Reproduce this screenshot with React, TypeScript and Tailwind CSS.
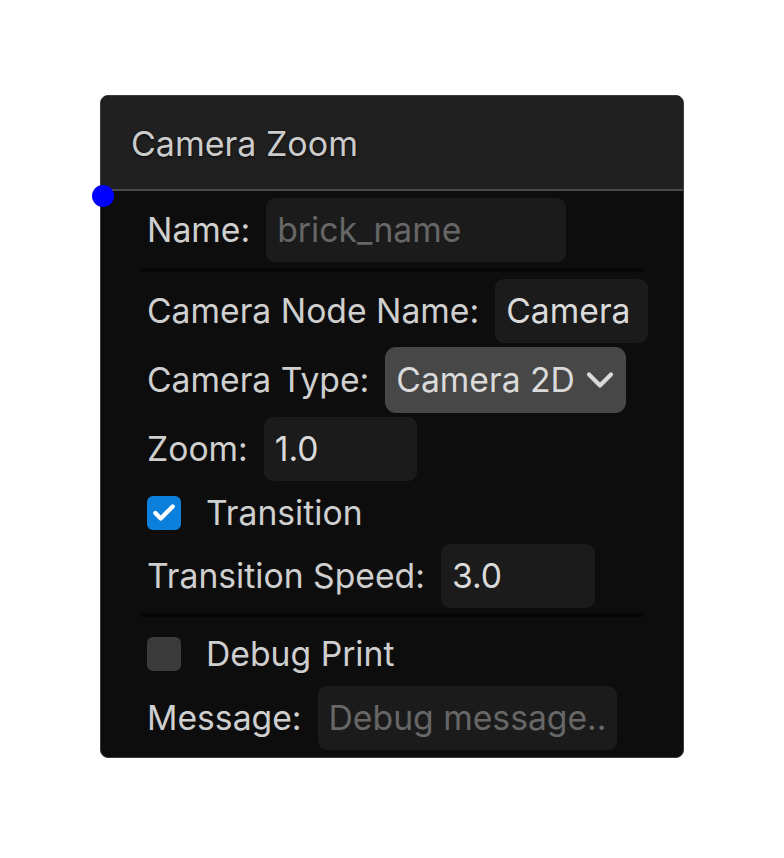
import { ChevronDown, Check } from 'lucide-react'

type FieldProps = {
    label: string
    value?: string
    placeholder?: string
    width: string
}

function Field({ label, value, placeholder, width }: FieldProps) {
    return (
        <div className="flex items-center h-[64px] gap-[16px]">
            <span className="text-[#cfcfcf] whitespace-nowrap">{label}</span>
            <div className={`h-full ${width} shrink-0 rounded-[9px] bg-[#1b1b1b] px-[11px] flex items-center overflow-hidden whitespace-nowrap`}>
                {value ? (
                    <span className="text-[#dadada]">{value}</span>
                ) : (
                    <span className="text-[#676767]">{placeholder}</span>
                )}
            </div>
        </div>
    )
}

function Toggle({ label, checked }: { label: string; checked: boolean }) {
    return (
        <div className="flex items-center h-[55px] gap-[25px]">
            <div
                className={`w-[34px] h-[34px] shrink-0 rounded-[6px] flex items-center justify-center ${checked ? 'bg-[#0b7fdc]' : 'bg-[#3a3a3a]'}`}
            >
                {checked && <Check className="w-[26px] h-[26px] text-white" strokeWidth={4} />}
            </div>
            <span className="text-[#cfcfcf]">{label}</span>
        </div>
    )
}

export default function App() {
    return (
        <div className="min-h-screen bg-white pt-[95px] pl-[100px]" style={{ fontFamily: 'Inter, "Noto Sans", sans-serif' }}>
            <div className="relative w-[584px] rounded-[8px] border border-[#3c3c3c] bg-[#0d0d0d] text-[33.7px] leading-none">
                {/* Node header */}
                <div className="h-[95px] px-[30px] pt-[3px] flex items-center bg-[#202020] rounded-t-[8px] border-b-2 border-[#4a4a4a]">
                    <span className="text-[34px] text-[#cbcbcb] [text-shadow:0_1px_3px_rgba(0,0,0,0.8)]">Camera Zoom</span>
                </div>

                {/* Input port */}
                <div className="absolute left-[-9px] top-[89px] w-[22px] h-[22px] rounded-full bg-[#0000ff]" />

                <div className="mx-[39px] px-[7px] pt-[7px] pb-[6px] border-b-4 border-[#070707]">
                    <Field label="Name:" placeholder="brick_name" width="w-[300px]" />
                </div>

                <div className="mx-[39px] px-[7px] pt-[7px] pb-[5px] border-b-4 border-[#070707] flex flex-col gap-[4px]">
                    <Field label="Camera Node Name:" value="Camera" width="w-[153px]" />
                    <div className="flex items-center h-[66px] gap-[16px]">
                        <span className="text-[#cfcfcf] whitespace-nowrap">Camera Type:</span>
                        <div className="h-full w-[241px] shrink-0 rounded-[11px] bg-[#474747] pl-[11px] pr-[4px] flex items-center justify-between whitespace-nowrap">
                            <span className="text-[#dadada]">Camera 2D</span>
                            <ChevronDown className="w-[44px] h-[44px] shrink-0 text-[#dadada]" strokeWidth={2.3} />
                        </div>
                    </div>
                    <Field label="Zoom:" value="1.0" width="w-[153px]" />
                    <Toggle label="Transition" checked />
                    <Field label="Transition Speed:" value="3.0" width="w-[154px]" />
                </div>

                <div className="mx-[39px] px-[7px] pt-[9px] pb-[7px] flex flex-col gap-[5px]">
                    <Toggle label="Debug Print" checked={false} />
                    <Field label="Message:" placeholder="Debug message.." width="w-[299px]" />
                </div>
            </div>
        </div>
    )
}
